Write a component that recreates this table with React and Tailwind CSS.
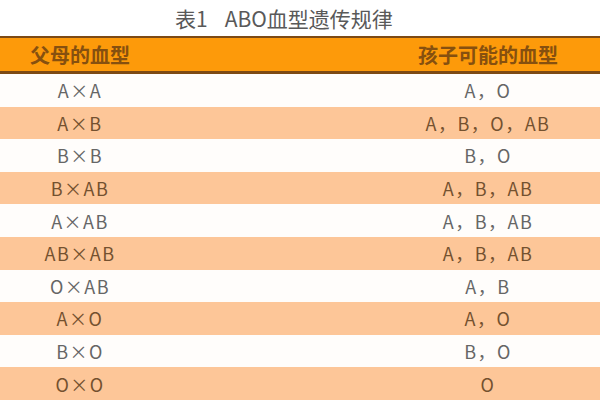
const rows = [
  ["A×A", "A，O"],
  ["A×B", "A，B，O，AB"],
  ["B×B", "B，O"],
  ["B×AB", "A，B，AB"],
  ["A×AB", "A，B，AB"],
  ["AB×AB", "A，B，AB"],
  ["O×AB", "A，B"],
  ["A×O", "A，O"],
  ["B×O", "B，O"],
  ["O×O", "O"],
];

export default function App() {
  return (
    <div
      className="w-[600px] h-[400px] overflow-hidden bg-white"
      style={{ fontFamily: '"Noto Sans CJK SC", "Noto Sans", sans-serif' }}
    >
      {/* Title */}
      <div className="h-[36px] flex items-center pl-[175px] text-[21px] leading-none text-[#595959]">
        <span>表1</span>
        <span className="ml-[17px]">ABO血型遗传规律</span>
      </div>

      {/* Header */}
      <div className="border-t-2 border-b-[3px] border-[#7d4a14] bg-[#fd9a0a] h-[38px] flex items-center justify-between">
        <div className="w-[160px] text-center text-[20px] font-bold text-[#86500f] leading-none">父母的血型</div>
        <div className="w-[224px] text-center text-[20px] font-bold text-[#86500f] leading-none">孩子可能的血型</div>
      </div>

      {/* Rows */}
      {rows.map((r, i) => (
        <div
          key={i}
          className={`h-[32.6px] flex items-center justify-between text-[18px] tracking-[1.5px] leading-none ${
            i % 2 === 1 ? "bg-[#fdc698] text-[#74512f]" : "bg-[#fffdfb] text-[#666666]"
          }`}
        >
          <div className="w-[160px] text-center">{r[0]}</div>
          <div className="w-[224px] text-center">{r[1]}</div>
        </div>
      ))}
    </div>
  );
}
